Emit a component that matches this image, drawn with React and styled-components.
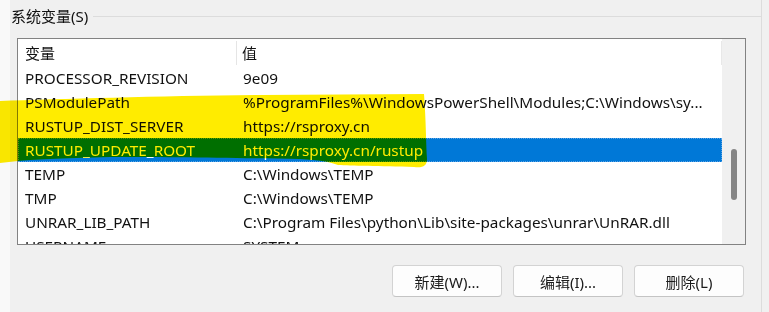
import React from "react";
import styled, { createGlobalStyle } from "styled-components";

const Global = createGlobalStyle`
  html, body { margin: 0; padding: 0; background: #f0f0f0; }
  body {
    width: 769px; height: 312px; overflow: hidden;
    font-family: "Noto Sans", "Noto Sans CJK SC", sans-serif;
    color: #111;
  }
`;

const Page = styled.div`
  position: relative;
  display: flex;
  width: 769px;
  height: 312px;
  background: #f0f0f0;
`;

const LeftStrip = styled.div`
  width: 10px;
  flex: none;
  background: #f9f9f9;
`;

const Group = styled.div`
  width: 752px;
  flex: none;
  display: flex;
  flex-direction: column;
  border-right: 1px solid #dcdcdc;
  box-sizing: border-box;
`;

const TitleRow = styled.div`
  height: 32px;
  display: flex;
  align-items: center;
`;

const Legend = styled.span`
  padding-left: 1px;
  font-size: 15px;
  line-height: 20px;
  color: #111;
`;

const Rule = styled.div`
  flex: 1;
  height: 1px;
  margin-left: 5px;
  background: #dcdcdc;
`;

const Body = styled.div`
  padding: 6px 15px 0 7px;
  display: flex;
  flex-direction: column;
`;

const List = styled.div`
  height: 207px;
  border: 1px solid #828282;
  box-sizing: border-box;
  display: flex;
  overflow: hidden;
  background: #fff;
`;

const ListContent = styled.div`
  width: 704px;
  flex: none;
  display: flex;
  flex-direction: column;
  overflow: hidden;
  background: #fff;
`;

const Header = styled.div`
  height: 27px;
  flex: none;
  display: flex;
  align-items: center;
`;

const HeadCell = styled.div`
  height: 24px;
  display: flex;
  align-items: center;
  box-sizing: border-box;
  font-size: 15px;
  ${(p) =>
    p.$first
      ? `width: 219px; padding-left: 7px; border-right: 1px solid #e5e5e5;`
      : `flex: 1; padding-left: 5px; border-right: 1px solid #e8e8e8;`}
`;

const Row = styled.div`
  height: 24px;
  flex: none;
  display: flex;
  align-items: center;
  box-sizing: border-box;
  font-size: 15.3px;
  white-space: nowrap;
  color: ${(p) => (p.$selected ? "#fff" : "#111")};
  background: ${(p) => (p.$selected ? "#0078d7" : "transparent")};
  border: 1px dotted ${(p) => (p.$selected ? "#5aa2e6" : "transparent")};
`;

const NameCell = styled.div`
  width: 219px;
  flex: none;
  padding-left: 6px;
  box-sizing: border-box;
  overflow: hidden;
`;

const ValueCell = styled.div`
  flex: 1;
  padding-left: 5px;
  overflow: hidden;
`;

const ScrollTrack = styled.div`
  width: 23px;
  flex: none;
  background: #f0f0f0;
  padding-top: 110px;
  box-sizing: border-box;
`;

const Thumb = styled.div`
  width: 6px;
  height: 51px;
  margin-left: 9px;
  border-radius: 3px;
  background: #858585;
`;

const ButtonRow = styled.div`
  display: flex;
  justify-content: flex-end;
  gap: 11px;
  margin-top: 20px;
  padding-right: 2px;
`;

const Button = styled.button`
  width: 110px;
  height: 32px;
  box-sizing: border-box;
  border: 1px solid #d3d3d3;
  border-bottom-color: #c4c4c4;
  border-radius: 4px;
  background: #fdfdfd;
  font-family: "Noto Sans", "Noto Sans CJK SC", sans-serif;
  font-size: 15px;
  color: #1b1b1b;
  padding: 0;
`;

const Marker = styled.svg`
  position: absolute;
  left: 0;
  top: 0;
  width: 769px;
  height: 312px;
  pointer-events: none;
  mix-blend-mode: multiply;
`;

const rows = [
  ["PROCESSOR_REVISION", "9e09"],
  ["PSModulePath", "%ProgramFiles%\\WindowsPowerShell\\Modules;C:\\Windows\\sy..."],
  ["RUSTUP_DIST_SERVER", "https://rsproxy.cn"],
  ["RUSTUP_UPDATE_ROOT", "https://rsproxy.cn/rustup", true],
  ["TEMP", "C:\\Windows\\TEMP"],
  ["TMP", "C:\\Windows\\TEMP"],
  ["UNRAR_LIB_PATH", "C:\\Program Files\\python\\Lib\\site-packages\\unrar\\UnRAR.dll"],
  ["USERNAME", "SYSTEM"],
];

export default function App() {
  return (
    <Page>
      <Global />
      <LeftStrip />
      <Group>
        <TitleRow>
          <Legend>系统变量(S)</Legend>
          <Rule />
        </TitleRow>
        <Body>
          <List>
            <ListContent>
              <Header>
                <HeadCell $first>变量</HeadCell>
                <HeadCell>值</HeadCell>
              </Header>
              {rows.map(([name, value, sel]) => (
                <Row key={name} $selected={sel}>
                  <NameCell>{name}</NameCell>
                  <ValueCell>{value}</ValueCell>
                </Row>
              ))}
            </ListContent>
            <ScrollTrack>
              <Thumb />
            </ScrollTrack>
          </List>
          <ButtonRow>
            <Button>新建(W)...</Button>
            <Button>编辑(I)...</Button>
            <Button>删除(L)</Button>
          </ButtonRow>
        </Body>
      </Group>
      <Marker viewBox="0 0 769 312">
        <path
          d="M0,101 C60,99 160,96 260,95 L424,94 C426,120 426,145 427,159 C427,166 423,168 414,167 C380,166 350,166 338,165 C330,162 320,160 300,159 C240,158 160,157 110,157 C60,158 30,160 18,161 L0,163 Z"
          fill="#ffec00"
        />
      </Marker>
    </Page>
  );
}
